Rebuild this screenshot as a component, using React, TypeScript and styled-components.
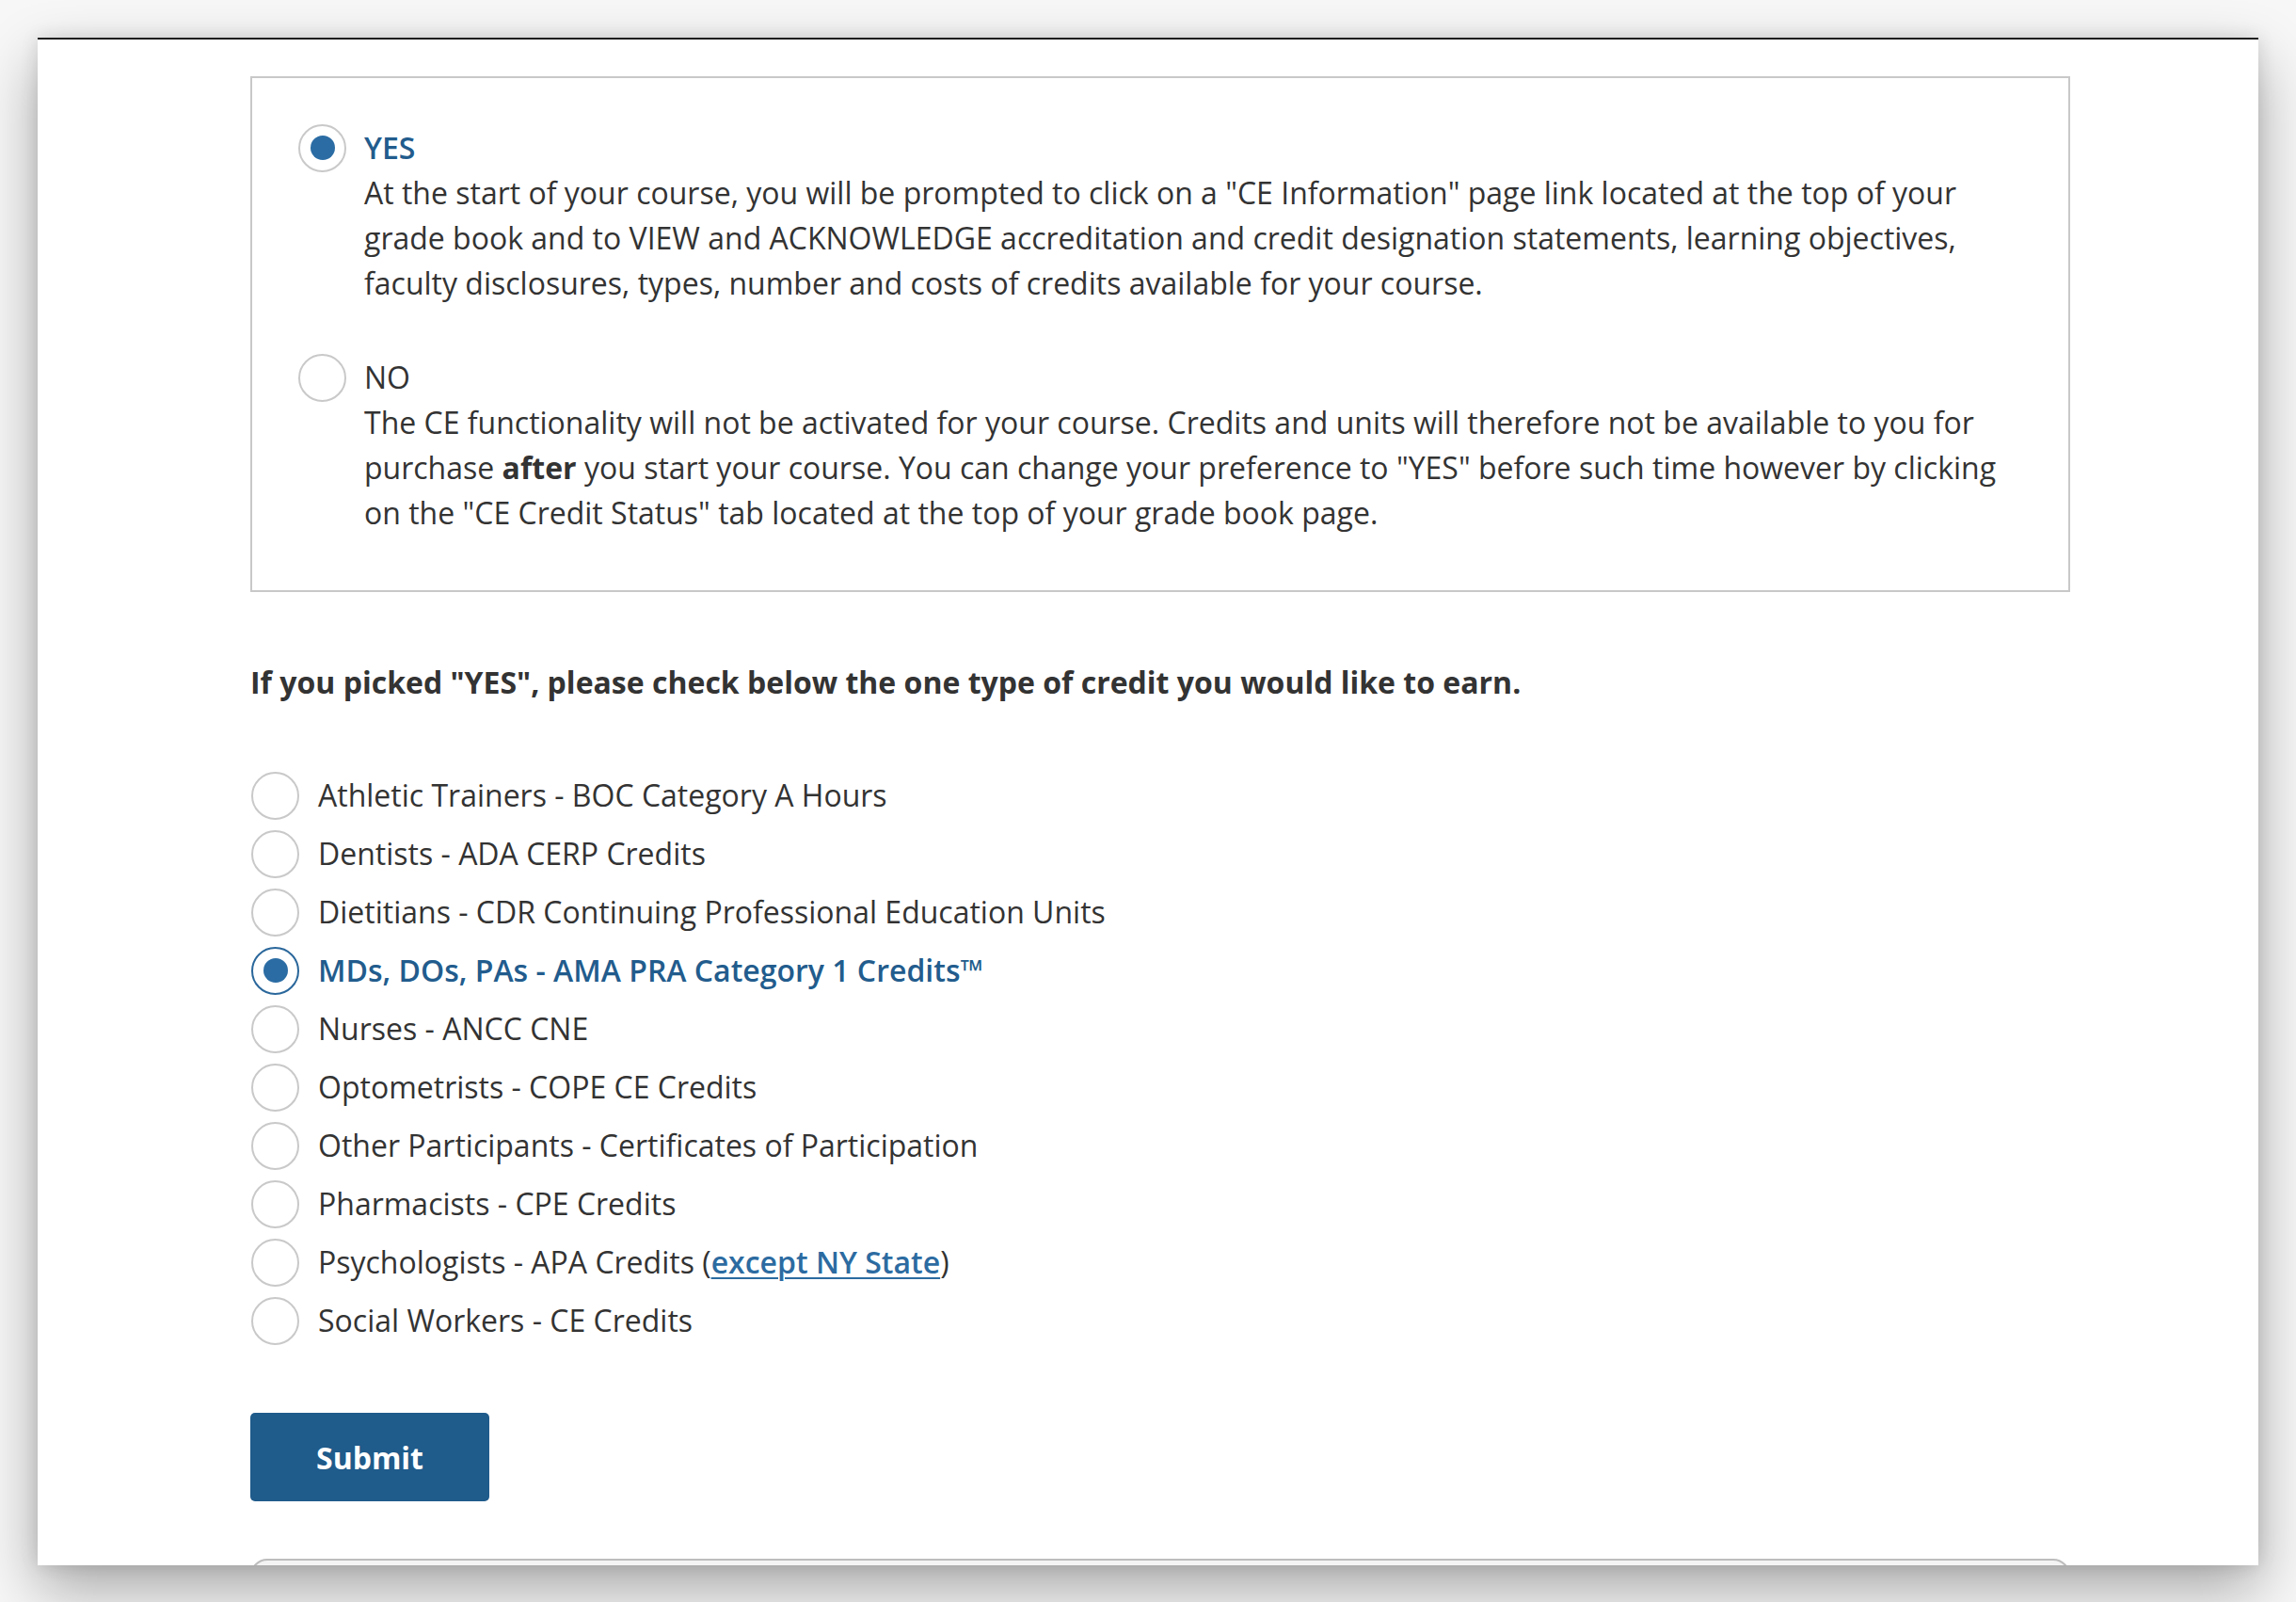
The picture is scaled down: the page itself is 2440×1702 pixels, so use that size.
import React from "react";
import styled, { createGlobalStyle, css } from "styled-components";

const GlobalStyle = createGlobalStyle`
  html, body {
    margin: 0;
    padding: 0;
    background: #f7f7f7;
  }
  body {
    font-family: "Open Sans", "Noto Sans", sans-serif;
    color: #333333;
  }
`;

const Stage = styled.div`
  width: 2440px;
  height: 1702px;
  padding: 40px 40px 0 40px;
  box-sizing: border-box;
  overflow: hidden;
`;

const Window = styled.div`
  width: 2360px;
  height: 1623px;
  box-sizing: border-box;
  background: #ffffff;
  border-top: 2px solid #1e1e1e;
  overflow: hidden;
  box-shadow: 0 26px 60px rgba(0, 0, 0, 0.32), 0 0 18px rgba(0, 0, 0, 0.12);
  padding: 39px 0 0 226px;
`;

const Column = styled.div`
  width: 1934px;
  display: flex;
  flex-direction: column;
`;

const ChoiceBox = styled.div`
  border: 2px solid #c8c8c8;
  padding: 50px 20px 58px 49px;
  display: flex;
  flex-direction: column;
  gap: 52px;
`;

const Choice = styled.div`
  display: flex;
  align-items: flex-start;
  gap: 19px;
`;

const RadioWrap = styled.div`
  height: 48px;
  display: flex;
  align-items: center;
  flex: none;
`;

const Radio = styled.span<{ $checked?: boolean; $blueRing?: boolean }>`
  width: 51px;
  height: 51px;
  box-sizing: border-box;
  border-radius: 50%;
  border: 2px solid ${(p) => (p.$blueRing ? "#2a679b" : "#c9c9c9")};
  background: #ffffff;
  display: flex;
  align-items: center;
  justify-content: center;
  flex: none;
  &::after {
    content: "";
    width: 26px;
    height: 26px;
    border-radius: 50%;
    background: #2b6ca4;
    display: ${(p) => (p.$checked ? "block" : "none")};
  }
`;

const ChoiceBody = styled.div`
  display: flex;
  flex-direction: column;
  font-size: 32px;
  line-height: 48px;
  white-space: nowrap;
`;

const ChoiceLabel = styled.div<{ $active?: boolean }>`
  ${(p) =>
    p.$active
      ? css`
          color: #225c8d;
          font-weight: 600;
        `
      : css`
          color: #333333;
          font-weight: 400;
        `}
`;

const ChoiceText = styled.p`
  margin: 0;
  color: #333333;
  b {
    font-weight: 700;
  }
`;

const Heading = styled.h3`
  margin: 72px 0 0 0;
  font-size: 32px;
  line-height: 48px;
  font-weight: 700;
  color: #333333;
`;

const OptionList = styled.div`
  margin-top: 65px;
  display: flex;
  flex-direction: column;
`;

const OptionRow = styled.label`
  height: 62px;
  display: flex;
  align-items: center;
  gap: 20px;
  padding-left: 1px;
`;

const OptionText = styled.span<{ $active?: boolean }>`
  font-size: 32px;
  line-height: 48px;
  color: ${(p) => (p.$active ? "#225c8d" : "#333333")};
  font-weight: ${(p) => (p.$active ? 600 : 400)};
`;

const Link = styled.a`
  color: #2c6ba1;
  font-weight: 600;
  text-decoration: underline;
  text-underline-offset: 4px;
  text-decoration-thickness: 2px;
`;

const SubmitButton = styled.button`
  margin-top: 67px;
  width: 254px;
  height: 94px;
  border: none;
  border-radius: 5px;
  background: #1f5b8b;
  color: #ffffff;
  font-family: "Open Sans", "Noto Sans", sans-serif;
  font-size: 32px;
  font-weight: 700;
  align-self: flex-start;
`;

const NextCard = styled.div`
  margin-top: 61px;
  height: 60px;
  border: 2px solid #bdbdbd;
  border-radius: 18px 18px 0 0;
  background: #f3f3f3;
`;

const options: { label: React.ReactNode; checked?: boolean }[] = [
  { label: "Athletic Trainers - BOC Category A Hours" },
  { label: "Dentists - ADA CERP Credits" },
  { label: "Dietitians - CDR Continuing Professional Education Units" },
  { label: "MDs, DOs, PAs - AMA PRA Category 1 Credits™", checked: true },
  { label: "Nurses - ANCC CNE" },
  { label: "Optometrists - COPE CE Credits" },
  { label: "Other Participants - Certificates of Participation" },
  { label: "Pharmacists - CPE Credits" },
  {
    label: (
      <>
        Psychologists - APA Credits (<Link href="#">except NY State</Link>)
      </>
    ),
  },
  { label: "Social Workers - CE Credits" },
];

export default function App() {
  return (
    <>
      <GlobalStyle />
      <Stage>
        <Window>
          <Column>
            <ChoiceBox>
              <Choice>
                <RadioWrap>
                  <Radio $checked />
                </RadioWrap>
                <ChoiceBody>
                  <ChoiceLabel $active>YES</ChoiceLabel>
                  <ChoiceText>
                    At the start of your course, you will be prompted to click on a "CE Information" page link located at the top of your
                    <br />
                    grade book and to VIEW and ACKNOWLEDGE accreditation and credit designation statements, learning objectives,
                    <br />
                    faculty disclosures, types, number and costs of credits available for your course.
                  </ChoiceText>
                </ChoiceBody>
              </Choice>
              <Choice>
                <RadioWrap>
                  <Radio />
                </RadioWrap>
                <ChoiceBody>
                  <ChoiceLabel>NO</ChoiceLabel>
                  <ChoiceText>
                    The CE functionality will not be activated for your course. Credits and units will therefore not be available to you for
                    <br />
                    purchase <b>after</b> you start your course. You can change your preference to "YES" before such time however by clicking
                    <br />
                    on the "CE Credit Status" tab located at the top of your grade book page.
                  </ChoiceText>
                </ChoiceBody>
              </Choice>
            </ChoiceBox>

            <Heading>If you picked "YES", please check below the one type of credit you would like to earn.</Heading>

            <OptionList>
              {options.map((o, i) => (
                <OptionRow key={i}>
                  <Radio $checked={o.checked} $blueRing={o.checked} />
                  <OptionText $active={o.checked}>{o.label}</OptionText>
                </OptionRow>
              ))}
            </OptionList>

            <SubmitButton>Submit</SubmitButton>
            <NextCard />
          </Column>
        </Window>
      </Stage>
    </>
  );
}
